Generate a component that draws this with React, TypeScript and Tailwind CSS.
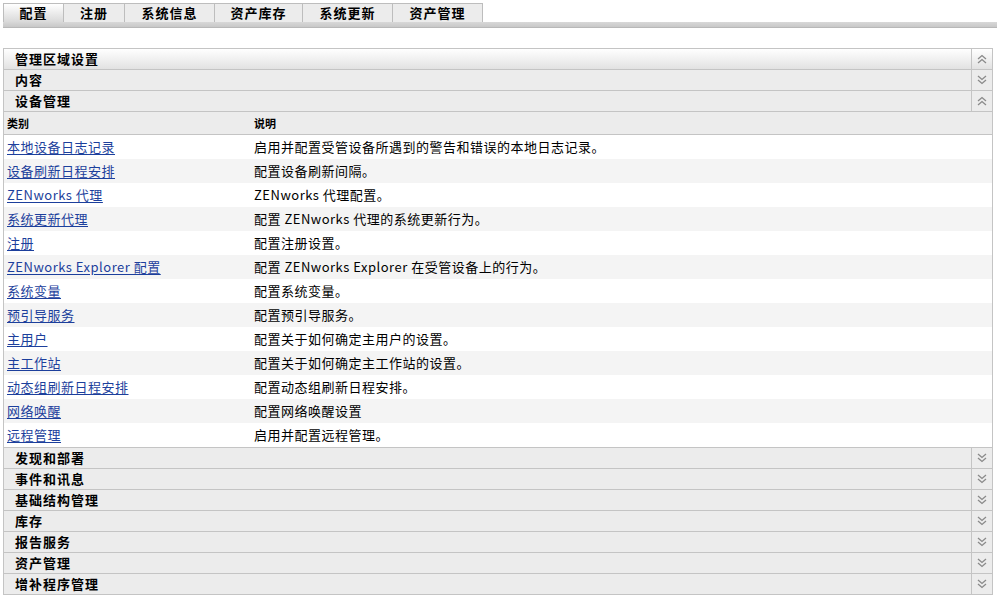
import React from 'react';

const font = { fontFamily: '"Noto Sans CJK SC", "DejaVu Sans", sans-serif' };

const tabs = [
  { label: '配置', w: 'w-[61px]', active: true },
  { label: '注册', w: 'w-[61px]' },
  { label: '系统信息', w: 'w-[90px]' },
  { label: '资产库存', w: 'w-[88px]' },
  { label: '系统更新', w: 'w-[90px]' },
  { label: '资产管理', w: 'w-[90px]' },
];

const rows = [
  ['本地设备日志记录', '启用并配置受管设备所遇到的警告和错误的本地日志记录。'],
  ['设备刷新日程安排', '配置设备刷新间隔。'],
  ['ZENworks 代理', 'ZENworks 代理配置。'],
  ['系统更新代理', '配置 ZENworks 代理的系统更新行为。'],
  ['注册', '配置注册设置。'],
  ['ZENworks Explorer 配置', '配置 ZENworks Explorer 在受管设备上的行为。'],
  ['系统变量', '配置系统变量。'],
  ['预引导服务', '配置预引导服务。'],
  ['主用户', '配置关于如何确定主用户的设置。'],
  ['主工作站', '配置关于如何确定主工作站的设置。'],
  ['动态组刷新日程安排', '配置动态组刷新日程安排。'],
  ['网络唤醒', '配置网络唤醒设置'],
  ['远程管理', '启用并配置远程管理。'],
];

const closed = ['发现和部署', '事件和讯息', '基础结构管理', '库存', '报告服务', '资产管理', '增补程序管理'];

function Chevron({ up }: { up?: boolean }) {
  return (
    <svg width="10" height="10" viewBox="0 0 10 10" className={up ? '' : 'rotate-180'}>
      <path d="M1 5 L5 1.5 L9 5" fill="none" stroke="#8a8a8a" strokeWidth="1.3" />
      <path d="M1 9 L5 5.5 L9 9" fill="none" stroke="#8a8a8a" strokeWidth="1.3" />
    </svg>
  );
}

function SectionHead({ title, up, first }: { title: string; up?: boolean; first?: boolean }) {
  return (
    <div
      className={
        'flex h-[21px] border-b border-[#c4c4c4] ' +
        (first ? 'bg-gradient-to-b from-white to-[#e2e2e2]' : 'bg-[#ececec]')
      }
    >
      <div className="flex-1 pl-[11px] flex items-center text-[13px] tracking-[1px] font-bold text-black">{title}</div>
      <div className="w-[21px] border-l border-[#c4c4c4] flex items-center justify-center">
        <Chevron up={up} />
      </div>
    </div>
  );
}

export default function App() {
  return (
    <div className="w-[997px] h-[599px] bg-white overflow-hidden" style={font}>
      {/* tabs */}
      <div className="pt-[3px] pl-[3px]">
        <div className="flex h-[19px]">
          {tabs.map((t) => (
            <div
              key={t.label}
              className={
                t.w +
                ' flex items-center justify-center border-t border-r border-[#bdbdbd] text-[13px] tracking-[1px] font-bold text-black first:border-l ' +
                (t.active ? 'bg-gradient-to-b from-white to-[#d9d9d9]' : 'bg-[#ececec]')
              }
            >
              {t.label}
            </div>
          ))}
        </div>
        <div className="h-[6px] bg-gradient-to-b from-[#d8d8d8] to-[#c8c8c8] border-b border-[#b8b8b8]" />
      </div>

      {/* panel */}
      <div className="mt-[20px] ml-[3px] w-[990px] border border-[#c4c4c4] border-b-0">
        <SectionHead title="管理区域设置" up first />
        <SectionHead title="内容" />
        <SectionHead title="设备管理" up />

        <div className="flex h-[23px] bg-[#ececec] border-b border-[#c4c4c4] text-[11px] font-bold text-black items-center">
          <div className="w-[250px] pl-[3px]">类别</div>
          <div className="flex-1">说明</div>
        </div>

        {rows.map(([name, desc], i) => (
          <div
            key={name}
            className={
              'flex h-[24px] items-center text-[13px] tracking-[0.5px] ' +
              (i % 2 === 1 ? 'bg-[#f4f4f4]' : 'bg-white')
            }
          >
            <div className="w-[250px] pl-[3px]">
              <span className="text-[#1c3f9c] underline underline-offset-2">{name}</span>
            </div>
            <div className="flex-1 text-black">{desc}</div>
          </div>
        ))}

        <div className="border-t border-[#c4c4c4]">
          {closed.map((c) => (
            <SectionHead key={c} title={c} />
          ))}
        </div>
      </div>
    </div>
  );
}
